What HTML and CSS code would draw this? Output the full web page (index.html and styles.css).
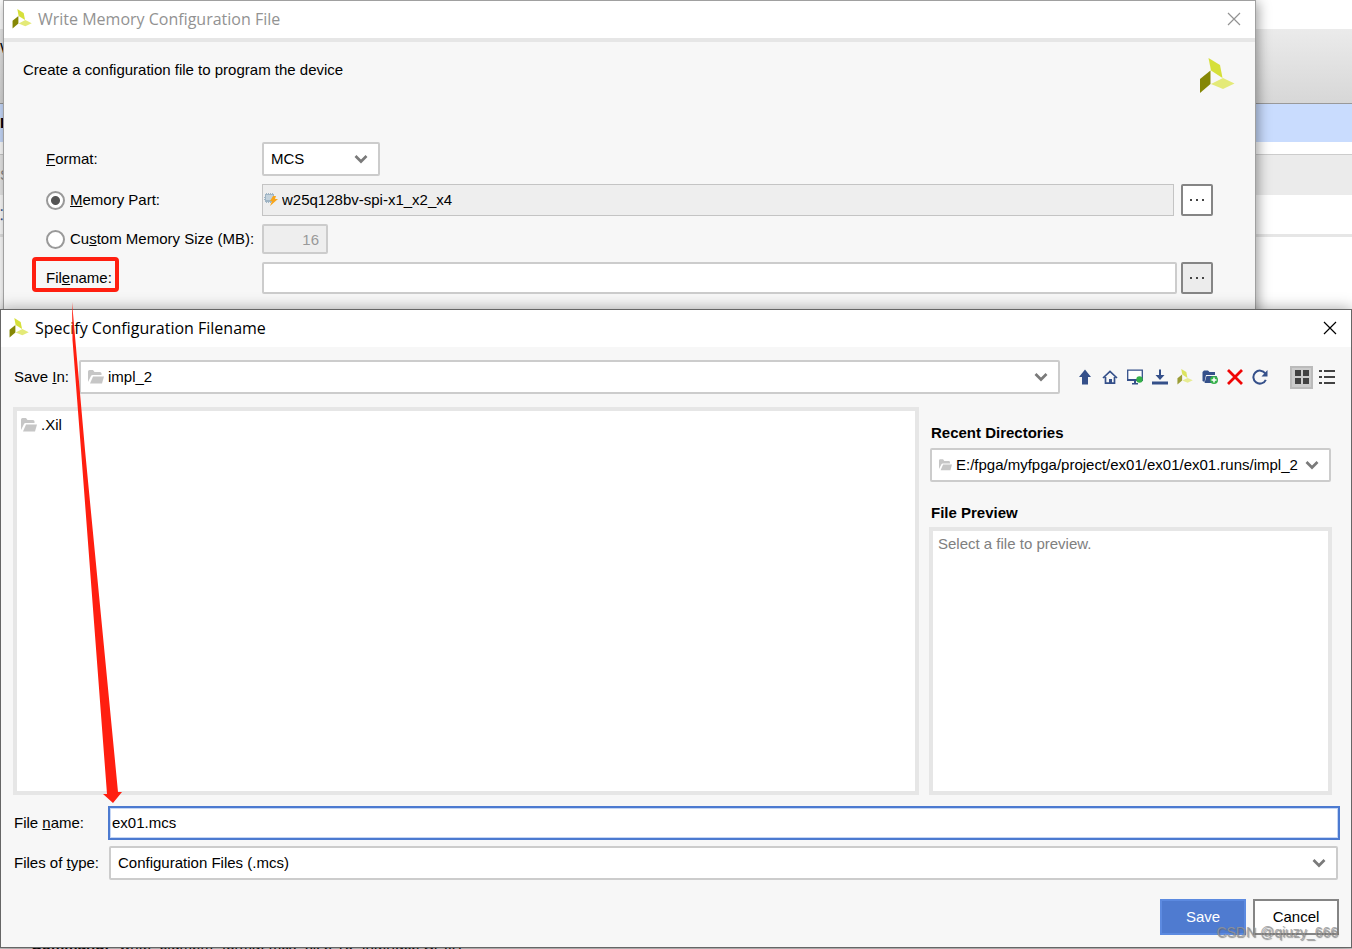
FILE: index.html
```html
<!DOCTYPE html>
<html lang="en">
<head>
<meta charset="utf-8">
<title>Specify Configuration Filename</title>
<link rel="stylesheet" href="styles.css">
</head>
<body>
<svg class="defs" aria-hidden="true">
  <symbol id="logo" viewBox="0 0 36 36">
    <path fill="#858705" d="M1 21 11.500 12.500V26L1 35z"/>
    <path fill="#d6e03a" d="M9.500 0 21 7l2.500 13L12 12.500z"/>
    <path fill="#e4ea78" d="M12 26 24 20l11.500 5.500L24 31z"/>
  </symbol>
  <symbol id="chevron" viewBox="0 0 14 10">
    <path fill="none" stroke="#7a7a7a" stroke-width="2.700" d="M1.500 2 7 7.500 12.500 2"/>
  </symbol>
  <symbol id="folder" viewBox="0 0 16 14">
    <path fill="#c6c6c6" d="M0 1.500Q0 0 1.500 0H5l1.500 2H12q1.500 0 1.500 1.500V5H4.500Q3.500 5 3 6L0 12z"/>
    <path fill="#c6c6c6" d="M5 6.500h11L14 13.500H2z"/>
  </symbol>
  <symbol id="close" viewBox="0 0 14 14">
    <path fill="none" stroke="currentColor" stroke-width="1.200" d="M1 1 13 13M13 1 1 13"/>
  </symbol>
  <symbol id="dots" viewBox="0 0 16 4">
    <path fill="#444" d="M1 1h2v2H1zM7 1h2v2H7zM13 1h2v2h-2z"/>
  </symbol>
</svg>

<div class="backdrop">
  <div class="strip menu"></div>
  <div class="strip tools">W</div>
  <div class="strip banner">II</div>
  <div class="strip gap"></div>
  <div class="strip tab">S</div>
  <div class="strip bar">⁚</div>
  <div class="strip rest"></div>
  <div class="console"><b>Command:</b> <span>write_cfgmem -format mcs -size 16 -interface SPIx1</span></div>
</div>

<section class="window memory" aria-label="Write Memory Configuration File">
  <header class="titlebar">
    <svg class="mark"><use href="#logo"/></svg>
    <h1>Write Memory Configuration File</h1>
    <button class="close" aria-label="Close"><svg><use href="#close"/></svg></button>
  </header>
  <div class="intro">
    <p>Create a configuration file to program the device</p>
    <svg class="brand"><use href="#logo"/></svg>
  </div>
  <form class="fields">
    <label for="format"><u>F</u>ormat:</label>
    <div class="pick format">
      <select id="format"><option>MCS</option></select>
      <svg class="chevron"><use href="#chevron"/></svg>
    </div>

    <label class="choice"><input type="radio" name="source" checked><span><u>M</u>emory Part:</span></label>
    <div class="part">
      <svg viewBox="0 0 14 14">
        <path fill="#9fb4c4" d="M1 1h1V0h1v1h1V0h1v1h1V0h1v1h1V0h1v1h1v8H9v1H8V9H7v1H6V9H5v1H4V9H3v1H2V9H1V7H0V6h1V5H0V4h1z"/>
        <path fill="#c3d2dc" d="M2 2h7v5H2z"/>
        <path fill="#f7a51c" d="M9 3h3l-1 3h3L6 13l2-5H6z"/>
      </svg>
      <input type="text" aria-label="Memory part" value="w25q128bv-spi-x1_x2_x4" readonly>
    </div>
    <button type="button" class="more" aria-label="Choose memory part"><svg><use href="#dots"/></svg></button>

    <label class="choice"><input type="radio" name="source"><span>Cu<u>s</u>tom Memory Size (MB):</span></label>
    <input class="size" type="text" aria-label="Custom memory size" value="16" disabled>

    <label for="filename"><span class="marked">Fil<u>e</u>name:</span></label>
    <input class="path" id="filename" type="text">
    <button type="button" class="more pressed" aria-label="Choose file"><svg><use href="#dots"/></svg></button>
  </form>
</section>

<section class="window chooser" aria-label="Specify Configuration Filename">
  <header class="titlebar">
    <svg class="mark"><use href="#logo"/></svg>
    <h1>Specify Configuration Filename</h1>
    <button class="close" aria-label="Close"><svg><use href="#close"/></svg></button>
  </header>
  <div class="content">
    <div class="location">
      <label for="savein">Save <u>I</u>n:</label>
      <div class="pick with-folder">
        <svg class="folder"><use href="#folder"/></svg>
        <select id="savein"><option>impl_2</option></select>
        <svg class="chevron"><use href="#chevron"/></svg>
      </div>
      <div class="toolbar">
        <button aria-label="Up one level"><svg viewBox="0 0 16 16"><path fill="#35508a" d="M8 0.500 14 8h-3v7.500H5V8H2z"/></svg></button>
        <button aria-label="Home"><svg viewBox="0 0 16 16"><path fill="none" stroke="#35508a" stroke-width="1.700" d="M1 9 8 2.500 15 9M3.500 8v6.200h9V8"/><path fill="#35508a" d="M7 10h3v5H7z"/></svg></button>
        <button aria-label="Desktop"><svg viewBox="0 0 16 16"><path fill="#fff" stroke="#35508a" stroke-width="1.300" d="M.7 1.200h14.600v9.600H.7z"/><path fill="#35508a" d="M0 10h16v2H0zM7 12h2v2h2v1.500H5V14h2z"/><circle cx="12.500" cy="10.500" r="3.200" fill="#35b04a"/></svg></button>
        <button aria-label="Downloads"><svg viewBox="0 0 16 16"><path fill="#35508a" d="M7 .5h2V6h3.500L8 11 3.500 6H7zM0 12.500h16v3H0z"/></svg></button>
        <button aria-label="Project directory"><svg opacity=".8"><use href="#logo"/></svg></button>
        <button aria-label="New folder"><svg viewBox="0 0 16 16"><path fill="#35508a" d="M.5 3 2 1.500h4L7.500 3H13v3H4L2.500 13 .5 12z"/><path fill="#35508a" d="M4.500 7H15L12 14H2.500z"/><circle cx="12" cy="11" r="4" fill="#35b04a"/><path stroke="#fff" stroke-width="1.500" d="M9.500 11h5M12 8.500v5"/></svg></button>
        <button aria-label="Delete"><svg viewBox="0 0 16 16"><path stroke="#f00505" stroke-width="2.800" d="M1 1 15 15M15 1 1 15"/></svg></button>
        <button aria-label="Refresh"><svg viewBox="0 0 16 16"><path fill="none" stroke="#35508a" stroke-width="2" d="M13.300 4.500A6.500 6.500 0 1 0 13.800 10.800"/><path fill="#35508a" d="M15.500 1v6.500H9.500z"/></svg></button>
      </div>
      <div class="views">
        <button class="on" aria-label="Icon view"><svg viewBox="0 0 16 16"><path fill="#424242" d="M1 1h6v6H1zM9 1h6v6H9zM1 9h6v6H1zM9 9h6v6H9z"/></svg></button>
        <button aria-label="List view"><svg viewBox="0 0 16 16"><path fill="#424242" d="M0 1h3v2H0zM5 1h11v2H5zM0 7h3v2H0zM5 7h11v2H5zM0 13h3v2H0zM5 13h11v2H5z"/></svg></button>
      </div>
    </div>

    <div class="browse">
      <ul class="files">
        <li><svg class="folder"><use href="#folder"/></svg>.Xil</li>
      </ul>
      <aside>
        <label class="heading" for="recent">Recent Directories</label>
        <div class="pick with-folder recent">
          <svg class="folder"><use href="#folder"/></svg>
          <select id="recent"><option>E:/fpga/myfpga/project/ex01/ex01/ex01.runs/impl_2</option></select>
          <svg class="chevron"><use href="#chevron"/></svg>
        </div>
        <h2 class="heading">File Preview</h2>
        <div class="preview">Select a file to preview.</div>
      </aside>
    </div>

    <div class="naming">
      <label for="name">File <u>n</u>ame:</label>
      <input id="name" class="name" type="text" value="ex01.mcs">
      <label for="type">Files of <u>t</u>ype:</label>
      <div class="pick type">
        <select id="type"><option>Configuration Files (.mcs)</option></select>
        <svg class="chevron"><use href="#chevron"/></svg>
      </div>
    </div>
    <div class="actions">
      <button class="save">Save</button>
      <button class="cancel">Cancel</button>
    </div>
  </div>
</section>

<svg class="arrow" viewBox="0 0 60 510" aria-hidden="true">
  <path fill="#ff1f10" d="M12 2 25 150 58 492 62 492 53 503 43 494 47 494 21 150 12.500 40z"/>
</svg>
<div class="watermark">CSDN @qiuzy_666</div>
</body>
</html>
```

FILE: styles.css
```css
* { box-sizing: border-box; }

body {
  margin: 0;
  height: 100vh;
  position: relative;
  overflow: hidden;
  background: #fff;
  color: #000;
  font: 15px/20px "Liberation Sans", Arial, sans-serif;
}

h1, h2, p, ul { margin: 0; padding: 0; }
svg { display: block; flex: none; }
button, input, select { font: inherit; color: inherit; margin: 0; }
button { padding: 0; border: 0; background: none; }
.defs { position: absolute; width: 0; height: 0; }

/* Application behind the dialogs */
.backdrop { height: 100%; display: flex; flex-direction: column; }
.strip { flex: none; display: flex; align-items: center; overflow: hidden; }
.menu { height: 29px; }
.tools { height: 75px; padding-bottom: 36px; background: linear-gradient(#ebebeb, #d7d7d7); border-bottom: 1px solid #999; }
.banner { height: 38px; background: #c9dcfe; font-weight: bold; }
.gap { height: 12px; }
.tab { height: 41px; background: #ebebeb; border-top: 1px solid #ccc; color: #888; }
.bar { height: 42px; border-bottom: 3px solid #e6e6e6; color: #35508a; }
.rest { flex: 1; }
.console { flex: none; height: 11px; padding-left: 31px; line-height: 14px; background: #ccc; }
.console b { margin-right: 6px; }

/* Windows */
.window { position: absolute; display: flex; flex-direction: column; background: #f7f7f7; }
.memory { left: 3px; right: 96px; top: 0; height: 360px; border: 1px solid #a0a0a0; box-shadow: 2px 2px 12px rgba(0, 0, 0, .4); }
.chooser { left: 0; right: 0; top: 309px; bottom: 1px; border: 1px solid #666; box-shadow: 0 0 14px rgba(0, 0, 0, .35); }

.titlebar { flex: none; display: flex; align-items: center; height: 37px; padding: 0 14px 2px 8px; background: #fff; }
.titlebar h1 { flex: 1; font: 16px/22px "Open Sans", "Noto Sans", sans-serif; }
.memory .titlebar { height: 41px; border-bottom: 4px solid #e6e6e6; }
.memory h1, .memory .close { color: #929292; }
.mark { width: 20px; height: 20px; margin-right: 6px; }
.close svg { width: 14px; height: 14px; }

.intro { display: flex; justify-content: space-between; align-items: flex-start; height: 99px; padding: 16px 20px 0 19px; }
.intro p { padding-top: 2px; }
.brand { width: 36px; height: 36px; }

.fields {
  display: grid;
  grid-template-columns: 212px 1fr 32px;
  grid-template-rows: 35px 32px 30px 32px;
  gap: 8px 4px;
  align-items: center;
  padding: 0 42px;
}
.fields > label { grid-column: 1; }
.fields > :not(label):not(button) { grid-column: 2; }
.choice { display: flex; align-items: center; gap: 5px; }
.choice input {
  appearance: none;
  width: 19px;
  height: 19px;
  border: 2px solid #999;
  border-radius: 50%;
  background: #fff;
}
.choice input:checked { background: radial-gradient(#555 0 4px, #fff 5px); }
.choice span { white-space: nowrap; }
.marked { position: relative; }
.marked::after {
  content: "";
  position: absolute;
  inset: -12px -7px -6px -14px;
  border: 4px solid #ff1f10;
  border-radius: 4px;
}

/* Form controls */
.pick { position: relative; display: flex; align-items: center; height: 34px; }
.pick select {
  appearance: none;
  width: 100%;
  height: 100%;
  padding: 0 28px 0 7px;
  border: 2px solid #ccc;
  border-radius: 2px;
  background: #fff;
}
.pick .chevron { position: absolute; right: 12px; width: 14px; height: 10px; pointer-events: none; }
.pick .folder { position: absolute; left: 9px; }
.folder { width: 16px; height: 14px; }
.with-folder select { padding-left: 27px; }
.format { width: 118px; }

.part { display: flex; align-items: center; gap: 4px; height: 32px; margin-right: 3px; padding-left: 1px; border: 1px solid #c4c4c4; background: #eee; }
.part svg { width: 14px; height: 14px; }
.part input { flex: 1; min-width: 0; padding: 0; border: 0; background: none; }
.size { width: 66px; height: 30px; padding: 0 7px; border: 2px solid #ccc; border-radius: 2px; background: #eee; color: #999; text-align: right; }
.path { width: 100%; height: 32px; border: 2px solid #ccc; border-radius: 2px; background: #fff; }
.more { grid-column: 3; display: grid; place-items: center; width: 32px; height: 32px; border: 2px solid #858585; border-radius: 2px; background: #fff; }
.more svg { width: 16px; height: 4px; }
.pressed { background: #ececec; }

/* File chooser */
.content { flex: 1; min-height: 0; display: flex; flex-direction: column; padding: 13px 11px 12px 13px; }
.location { flex: none; display: flex; align-items: center; margin-right: 2px; }
.location label { width: 65px; }
.location .pick { flex: 1; }
.toolbar { display: flex; margin-left: 12px; }
.toolbar button { display: grid; place-items: center; width: 25px; height: 24px; }
.toolbar svg, .views svg { width: 16px; height: 16px; }
.views { display: flex; gap: 2px; margin-left: 18px; }
.views button { display: grid; place-items: center; width: 23px; height: 23px; }
.views .on { background: #ccc; border: 2px solid #bbb; }

.browse { flex: 1; min-height: 0; display: flex; gap: 10px; margin: 13px 8px 11px -1px; }
.files { flex: 1; list-style: none; padding: 4px 4px; border: 4px solid #e6e6e6; background: #fff; }
.files li { display: flex; align-items: center; gap: 4px; }
aside { width: 403px; display: flex; flex-direction: column; }
.heading { padding: 16px 0 5px 2px; font-size: 15px; line-height: 20px; font-weight: bold; }
h2.heading { padding: 21px 0 4px 2px; }
.recent { margin: 0 1px; }
.recent .folder { width: 13px; height: 12px; }
.recent select { padding-left: 24px; }
.preview { flex: 1; padding: 3px 5px; border: 4px solid #e6e6e6; background: #fff; color: #808080; }

.naming { flex: none; display: grid; grid-template-columns: 94px 1fr; gap: 6px 0; align-items: center; }
.name { width: 100%; height: 34px; padding: 0 2px 2px; border: 2px solid #4c7ad0; background: #fff; outline: 1px solid #c5d6f5; outline-offset: -3px; }
.type { margin: 0 2px 0 1px; }
.actions { flex: none; display: flex; justify-content: flex-end; gap: 7px; margin: 19px 1px 0 0; }
.actions button { width: 86px; height: 36px; border: 2px solid #858585; background: #fff; }
.actions .save { border-color: #5c8ae0; background: #4f7bd0; color: #fff; }

/* Annotations */
.arrow { position: absolute; left: 60px; top: 300px; width: 60px; height: 510px; overflow: visible; pointer-events: none; }
.watermark { position: absolute; right: 14px; bottom: 7px; color: rgba(150, 150, 150, .8); text-shadow: 1px 1px 1px rgba(100, 100, 100, .7); font: 14px/20px "Liberation Sans", Arial, sans-serif; }
```
